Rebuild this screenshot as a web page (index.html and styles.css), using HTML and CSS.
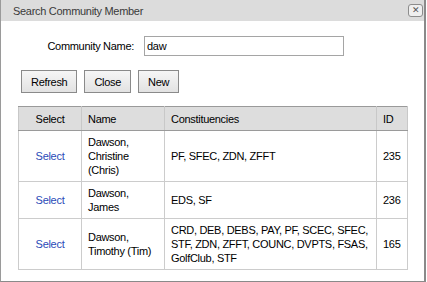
FILE: index.html
```html
<!DOCTYPE html>
<html>
<head>
<meta charset="utf-8">
<link rel="stylesheet" href="styles.css">
</head>
<body>
<div class="dialog">
  <div class="titlebar">
    <span class="title">Search Community Member</span>
    <span class="close">&#x2715;</span>
  </div>
  <div class="content">
    <div class="search-row">
      <label class="label">Community Name:</label>
      <div class="input">daw</div>
    </div>
    <div class="buttons">
      <button class="btn">Refresh</button>
      <button class="btn">Close</button>
      <button class="btn">New</button>
    </div>
    <table class="results">
      <colgroup>
        <col class="c-select"><col class="c-name"><col class="c-const"><col class="c-id">
      </colgroup>
      <thead>
        <tr><th class="center">Select</th><th>Name</th><th>Constituencies</th><th>ID</th></tr>
      </thead>
      <tbody>
        <tr><td class="center"><a class="link">Select</a></td><td>Dawson, Christine (Chris)</td><td>PF, SFEC, ZDN, ZFFT</td><td>235</td></tr>
        <tr><td class="center"><a class="link">Select</a></td><td>Dawson, James</td><td>EDS, SF</td><td>236</td></tr>
        <tr><td class="center"><a class="link">Select</a></td><td>Dawson, Timothy (Tim)</td><td>CRD, DEB, DEBS, PAY, PF, SCEC, SFEC, STF, ZDN, ZFFT, COUNC, DVPTS, FSAS, GolfClub, STF</td><td>165</td></tr>
      </tbody>
    </table>
  </div>
</div>
</body>
</html>
```
FILE: styles.css
```css
* { box-sizing: border-box; }
html, body { margin: 0; padding: 0; background: #fff; }
body { font-family: "Liberation Sans", Arial, sans-serif; font-size: 11px; letter-spacing: -0.3px; color: #000; }
.dialog {
  width: 426px; height: 282px;
  border-left: 1px solid #9a9a9a;
  border-right: 2px solid #8a8a8a;
  border-bottom: 1px solid #8a8a8a;
  background: #fff;
}
.titlebar {
  height: 21px; background: #dcdcdc;
  display: flex; align-items: center; justify-content: space-between;
  padding: 0 1px 0 12px;
}
.title { color: #3a3a3a; font-size: 11px; }
.close {
  width: 15px; height: 13px; border: 1px solid #8c8c8c; border-radius: 3px;
  background: #efefef; color: #555; font-size: 9px; line-height: 11px; text-align: center; letter-spacing: 0;
}
.content { padding: 15px 0 0 17px; }
.search-row { display: flex; align-items: center; }
.label { width: 126px; text-align: right; padding-right: 10px; }
.input {
  width: 200px; height: 20px; border: 1px solid #a5a5a5;
  padding: 0 0 0 2px; line-height: 18px;
}
.buttons { display: flex; gap: 7px; margin: 14px 0 0 3px; }
.btn {
  font-family: inherit; font-size: 11px; letter-spacing: -0.3px; color: #000;
  height: 23px; padding: 0 9px; border: 1px solid #8a8a8a; border-radius: 0;
  background: linear-gradient(#f6f6f6, #e2e2e2);
}
.results {
  margin-top: 13px; border-collapse: collapse; table-layout: fixed;
  width: 390px; border: 1px solid #9a9a9a;
}
.c-select { width: 63px; } .c-name { width: 83px; } .c-const { width: 212px; } .c-id { width: 31px; }
.results th {
  background: #dddddd; font-weight: normal; text-align: left;
  height: 24px; padding: 0 6px; border: 1px solid #c8c8c8; border-bottom: 1px solid #9a9a9a;
  border-top-color: #9a9a9a;
}
.results td {
  padding: 4px 6px; line-height: 14px; border: 1px solid #cccccc; vertical-align: middle;
}
.results .center { text-align: center; }
.link { color: #2b4bb8; text-decoration: none; }
```
